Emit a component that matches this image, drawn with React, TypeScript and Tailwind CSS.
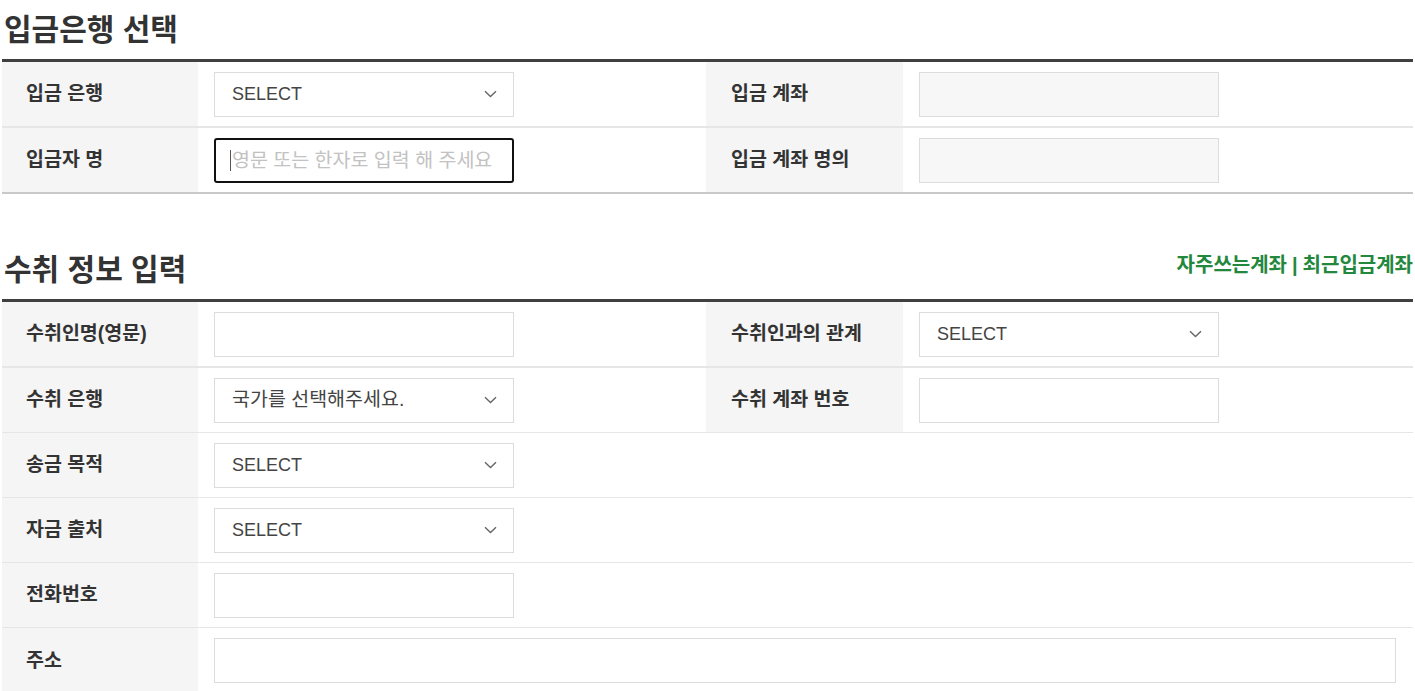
import React from 'react';

const Chevron: React.FC = () => (
  <svg width="13" height="8" viewBox="0 0 13 8" aria-hidden>
    <path d="M1 1.2l5.5 5.3 5.5-5.3" fill="none" stroke="#666" strokeWidth="1.4" />
  </svg>
);

const SelectBox: React.FC<{ value: string; ko?: boolean }> = ({ value, ko }) => (
  <div className={'w-[300px] h-[45px] border border-[#dcdcdc] bg-white flex items-center justify-between pl-[17px] pr-[16px] text-[#444] ' + (ko ? 'text-[19.5px]' : 'text-[18px]')}>
    <span>{value}</span>
    <Chevron />
  </div>
);

const TextBox: React.FC<{ readOnly?: boolean; wide?: boolean }> = ({ readOnly, wide }) => (
  <input
    type="text"
    readOnly={readOnly}
    className={
      (wide ? 'w-full ' : 'w-[300px] ') +
      'h-[45px] border border-[#dcdcdc] outline-none px-[17px] text-[18px] ' +
      (readOnly ? 'bg-[#f7f7f7]' : 'bg-white')
    }
  />
);

const Label: React.FC<{ children: React.ReactNode; second?: boolean }> = ({ children, second }) => (
  <div className={'bg-[#f5f5f5] flex items-center font-bold text-[19.5px] text-[#333] ' + (second ? 'pl-[25px]' : 'pl-[24px]')}>
    {children}
  </div>
);

const Cell: React.FC<{ children?: React.ReactNode; className?: string }> = ({ children, className }) => (
  <div className={'flex items-center pl-[16px] ' + (className ?? '')}>{children}</div>
);

export default function App() {
  return (
    <div className="bg-white min-h-screen font-['Liberation_Sans','Noto_Sans_CJK_KR',sans-serif] text-[#333]">
      <div className="w-[1411px] ml-[2px]">
        {/* 입금은행 선택 */}
        <div className="h-[59px] flex items-center pl-[2px]">
          <h2 className="text-[30px] font-bold text-[#333] leading-none">입금은행 선택</h2>
        </div>
        <div className="border-t-[3px] border-[#404040]">
          <div className="grid grid-cols-[196px_508px_197px_1fr] h-[66px] border-b-2 border-[#e6e6e6]">
            <Label>입금 은행</Label>
            <Cell><SelectBox value="SELECT" /></Cell>
            <Label second>입금 계좌</Label>
            <Cell><TextBox readOnly /></Cell>
          </div>
          <div className="grid grid-cols-[196px_508px_197px_1fr] h-[66px] border-b-2 border-[#c8c8c8]">
            <Label>입금자 명</Label>
            <Cell>
              <div className="relative">
                <input
                  type="text"
                  placeholder="영문 또는 한자로 입력 해 주세요"
                  className="w-[300px] h-[45px] border-2 border-[#111] rounded-[3px] outline-none pl-[16px] text-[19.5px] bg-white placeholder:text-[#c2c2c2]"
                />
                <span className="absolute left-[16px] top-[12px] w-px h-[21px] bg-[#555]" />
              </div>
            </Cell>
            <Label second>입금 계좌 명의</Label>
            <Cell><TextBox readOnly /></Cell>
          </div>
        </div>

        {/* 수취 정보 입력 */}
        <div className="h-[59px] mt-[46px] flex items-center justify-between pl-[2px]">
          <h2 className="text-[30px] font-bold text-[#333] leading-none">수취 정보 입력</h2>
          <div className="mb-[9px] text-[20px] font-bold text-[#23883d] flex items-center">
            <a href="#">자주쓰는계좌</a>
            <span className="px-[5px]">|</span>
            <a href="#">최근입금계좌</a>
          </div>
        </div>
        <div className="border-t-[3px] border-[#404040]">
          <div className="grid grid-cols-[196px_508px_197px_1fr] h-[66px] border-b-2 border-[#e6e6e6]">
            <Label>수취인명(영문)</Label>
            <Cell><TextBox /></Cell>
            <Label second>수취인과의 관계</Label>
            <Cell><SelectBox value="SELECT" /></Cell>
          </div>
          <div className="grid grid-cols-[196px_508px_197px_1fr] h-[65px] border-b border-[#e6e6e6]">
            <Label>수취 은행</Label>
            <Cell><SelectBox value="국가를 선택해주세요." ko /></Cell>
            <Label second>수취 계좌 번호</Label>
            <Cell><TextBox /></Cell>
          </div>
          <div className="grid grid-cols-[196px_508px_197px_1fr] h-[65px] border-b border-[#e6e6e6]">
            <Label>송금 목적</Label>
            <Cell><SelectBox value="SELECT" /></Cell>
          </div>
          <div className="grid grid-cols-[196px_508px_197px_1fr] h-[65px] border-b border-[#e6e6e6]">
            <Label>자금 출처</Label>
            <Cell><SelectBox value="SELECT" /></Cell>
          </div>
          <div className="grid grid-cols-[196px_508px_197px_1fr] h-[65px] border-b border-[#e6e6e6]">
            <Label>전화번호</Label>
            <Cell><TextBox /></Cell>
          </div>
          <div className="grid grid-cols-[196px_1fr] h-[65px]">
            <Label>주소</Label>
            <Cell className="pr-[17px]"><TextBox wide /></Cell>
          </div>
        </div>
      </div>
    </div>
  );
}
